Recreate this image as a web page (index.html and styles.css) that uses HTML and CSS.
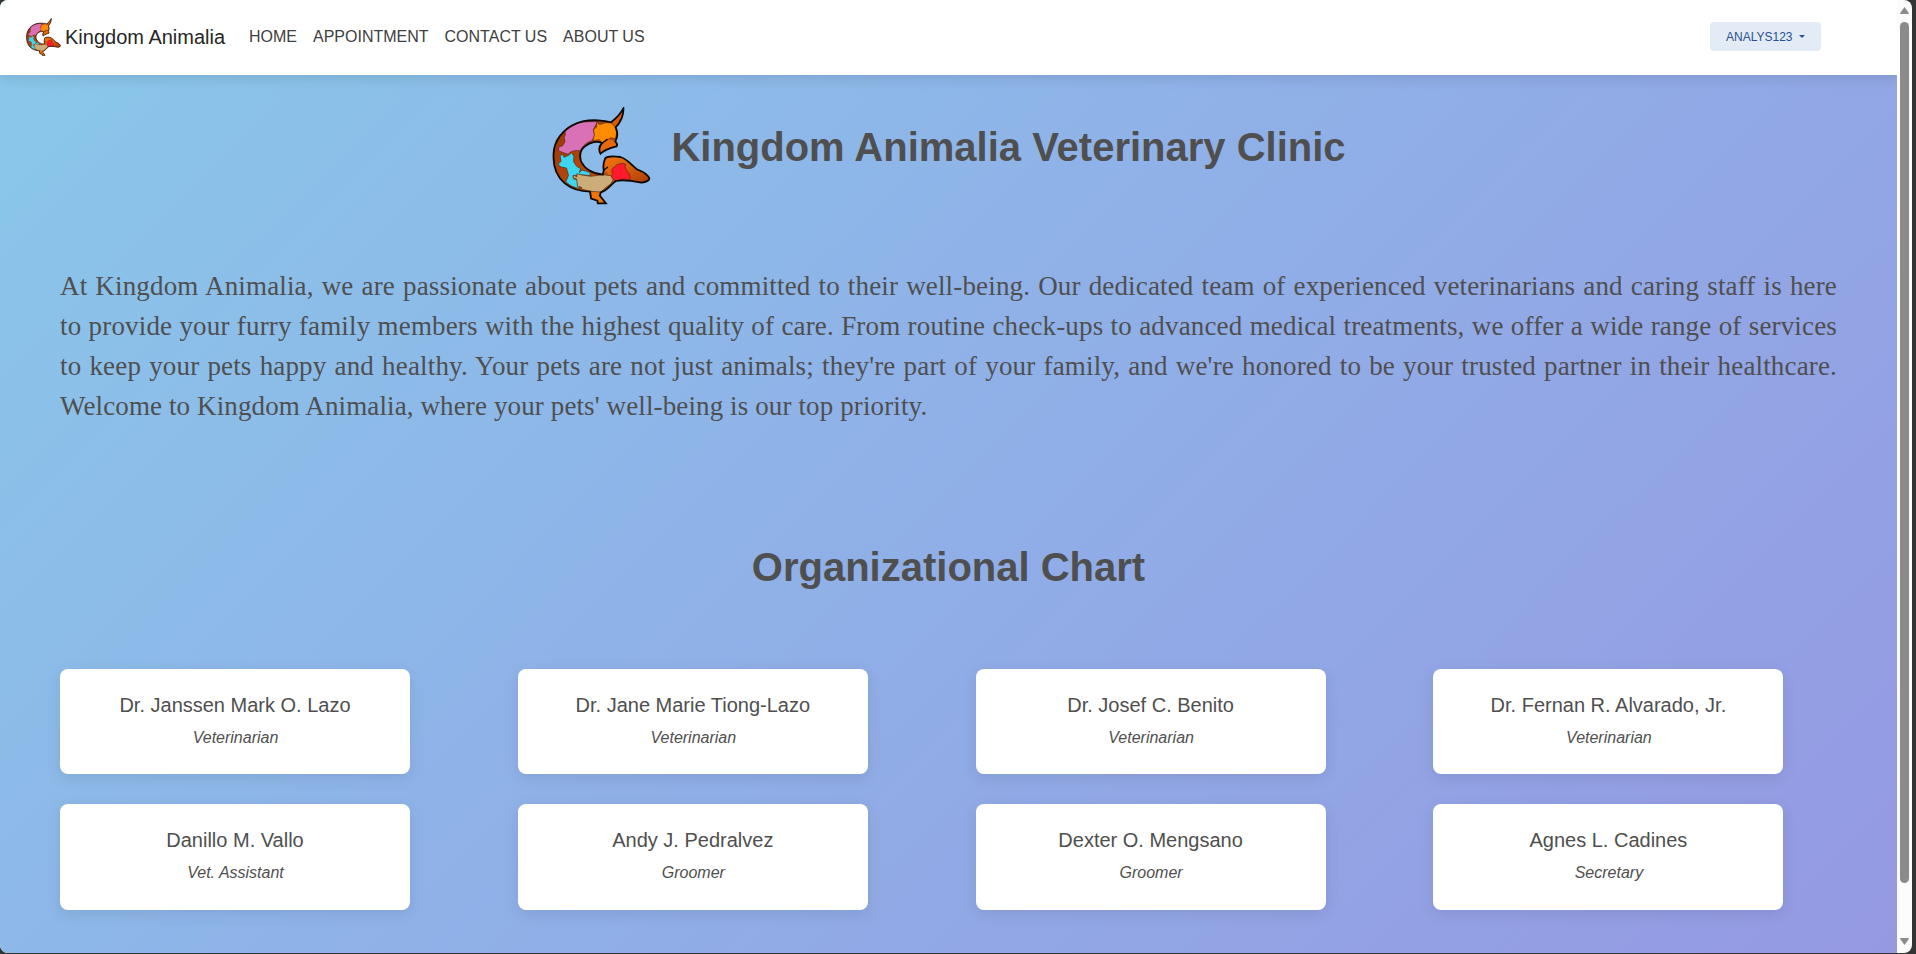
FILE: index.html
```html
<!DOCTYPE html>
<html lang="en">
<head>
<meta charset="utf-8">
<title>Kingdom Animalia</title>
<link rel="stylesheet" href="styles.css">
</head>
<body>
<svg class="defs" width="0" height="0" aria-hidden="true">
  <defs>
    <linearGradient id="fur" x1="0" y1="0" x2="1" y2="1">
      <stop offset="0" stop-color="#8f3208"/><stop offset=".5" stop-color="#b9480c"/><stop offset="1" stop-color="#e0600a"/>
    </linearGradient>
    <linearGradient id="beak" x1="0" y1="0" x2="1" y2="1">
      <stop offset="0" stop-color="#f07810"/><stop offset=".5" stop-color="#d95c0a"/><stop offset="1" stop-color="#a83e08"/>
    </linearGradient>
    <symbol id="logo" viewBox="39 33 294 294" preserveAspectRatio="none">
      <path fill="url(#fur)" d="M251 37C242 55 228 68 214 79C195 73 160 70 130 76C85 88 52 120 45 160C39 205 51 240 77 262C95 277 125 286 152 287L155 308L174 314L175 322H199L181 299L184 289C206 282 215 263 229 255C251 249 280 255 305 260C319 258 330 252 328 247C320 229 303 226 290 219C270 203 262 188 242 183C223 180 202 181 197 187C192 199 190 212 193 222L190 236C161 234 135 219 125 195C120 178 124 161 137 151C153 137 174 135 188 141C178 151 178 163 183 173C196 160 217 155 231 151C234 145 231 140 227 137C234 124 235 109 228 94C242 79 252 60 251 37Z"/>
      <path fill="#d95a0c" d="M251 37C242 55 228 68 214 79L228 94C242 79 252 60 251 37Z"/>
      <path fill="#e8690a" d="M190 138C178 151 178 163 183 173C196 160 217 155 231 151L227 136L205 129Z"/>
      <path fill="url(#beak)" d="M193 222C190 212 192 199 197 187C202 181 223 180 242 183C262 188 270 203 290 219C303 226 320 229 328 247C330 252 319 258 305 260C280 255 251 249 229 255L212 245L200 224L193 235Z"/>
      <path fill="#f27408" d="M152 287L155 308L174 314L175 322H199L181 299L184 289Z"/>
      <g stroke="#49240e" stroke-width="1.8" stroke-linejoin="round">
        <path fill="#da70b6" d="M77 102C100 80 130 76 174 77L162 101L166 119L158 134C145 137 130 148 124 164C105 163 94 165 87 175L70 169L58 164L60 152L70 150L78 136L75 124L79 116Z"/>
        <path fill="#ff8b00" d="M173 77L180 86L198 80L214 80L228 94L231 112L227 128L213 125L198 136L188 140L179 131L160 134L165 117L162 101L171 94Z"/>
        <path fill="#3fd5ef" d="M70 174L75 184L90 177L97 170L104 180L103 197L112 211L124 218L120 230L128 222L150 229L154 239L122 236L101 239L104 249L115 252L117 273L124 279L98 271L80 258L88 238L82 216L66 213L57 205L66 196L63 180Z"/>
        <path fill="#ccac79" d="M113 233L128 237L155 241L190 236L213 239L223 247L214 263L197 276L184 288L152 286L127 279L126 273L115 272L112 249L101 245L105 238L113 243Z"/>
        <path fill="#ff192d" d="M218 218L227 211L231 206L247 202L257 204L256 213L261 224L269 234L272 251L247 249L230 255L217 247L216 238L221 232L216 229Z"/>
      </g>
      <path fill="none" stroke="#0c0806" stroke-width="5.4" stroke-linejoin="miter" d="M251 37C242 55 228 68 214 79C195 73 160 70 130 76C85 88 52 120 45 160C39 205 51 240 77 262C95 277 125 286 152 287L155 308L174 314L175 322H199L181 299L184 289C206 282 215 263 229 255C251 249 280 255 305 260C319 258 330 252 328 247C320 229 303 226 290 219C270 203 262 188 242 183C223 180 202 181 197 187C192 199 190 212 193 222L190 236C161 234 135 219 125 195C120 178 124 161 137 151C153 137 174 135 188 141C178 151 178 163 183 173C196 160 217 155 231 151C234 145 231 140 227 137C234 124 235 109 228 94C242 79 252 60 251 37Z"/>
      <path fill="none" stroke="#0c0806" stroke-width="4" d="M193 222L205 213M188 141L204 129"/>
    </symbol>
  </defs>
</svg>
<div class="window">
  <div class="page">
    <nav class="navbar">
      <a class="brand"><svg class="brand-logo"><use href="#logo"/></svg><span class="brand-name">Kingdom Animalia</span></a>
      <div class="links"><a>HOME</a><a>APPOINTMENT</a><a>CONTACT US</a><a>ABOUT US</a></div>
      <button class="user">ANALYS123<span class="caret"></span></button>
    </nav>
    <main>
      <header class="hero">
        <svg class="hero-logo"><use href="#logo"/></svg>
        <h1>Kingdom Animalia Veterinary Clinic</h1>
      </header>
      <p class="about">
        <span>At Kingdom Animalia, we are passionate about pets and committed to their well-being. Our dedicated team of experienced veterinarians and caring staff is here</span>
        <span>to provide your furry family members with the highest quality of care. From routine check-ups to advanced medical treatments, we offer a wide range of services</span>
        <span>to keep your pets happy and healthy. Your pets are not just animals; they're part of your family, and we're honored to be your trusted partner in their healthcare.</span>
        <span class="last">Welcome to Kingdom Animalia, where your pets' well-being is our top priority.</span>
      </p>
      <h2>Organizational Chart</h2>
      <section class="chart">
        <div class="card"><h5>Dr. Janssen Mark O. Lazo</h5><em>Veterinarian</em></div>
        <div class="card"><h5>Dr. Jane Marie Tiong-Lazo</h5><em>Veterinarian</em></div>
        <div class="card"><h5>Dr. Josef C. Benito</h5><em>Veterinarian</em></div>
        <div class="card"><h5>Dr. Fernan R. Alvarado, Jr.</h5><em>Veterinarian</em></div>
        <div class="card"><h5>Danillo M. Vallo</h5><em>Vet. Assistant</em></div>
        <div class="card"><h5>Andy J. Pedralvez</h5><em>Groomer</em></div>
        <div class="card"><h5>Dexter O. Mengsano</h5><em>Groomer</em></div>
        <div class="card"><h5>Agnes L. Cadines</h5><em>Secretary</em></div>
      </section>
    </main>
  </div>
  <div class="scrollbar">
    <svg width="9" height="7"><path fill="#8b8b8b" d="M4.5 0L9 6.2Q9 7 8 7H1Q0 7 0 6.2Z"/></svg>
    <div class="thumb"></div>
    <svg width="9" height="7"><path fill="#8b8b8b" d="M4.5 7L9 .8Q9 0 8 0H1Q0 0 0 .8Z"/></svg>
  </div>
</div>
</body>
</html>
```
FILE: styles.css
```css
* { box-sizing: border-box; }
html, body { margin: 0; height: 100%; overflow: hidden; }
body { background: #343434; font-family: "Liberation Sans", Arial, sans-serif; font-size: 16px; color: #4f4f4f; }
.defs { position: absolute; }
.window { display: flex; width: 1912px; height: 953px; border-radius: 8px; overflow: hidden; background: #fcfcfc; }
.page { width: 1897px; height: 953px; overflow: hidden; background: linear-gradient(135deg, #89c8ea 0%, #8fb2e8 45%, #9599e2 100%); }
.navbar { display: flex; align-items: center; height: 75px; padding: 0 76px 2px 26px; background: #fff; box-shadow: 0 4px 12px rgba(0,0,0,.1); }
.brand { display: flex; align-items: center; color: #262626; font-size: 20px; }
.brand-logo { width: 35px; height: 38px; margin: 1px 4px 0 0; }
.brand-name { width: 159px; padding-top: 2px; white-space: nowrap; }
.links { display: flex; gap: 16px; margin-left: 25px; color: #404040; white-space: nowrap; }
.user { display: flex; align-items: center; width: 111px; height: 29px; margin-left: auto; padding: 0 16px; border: 0; border-radius: 4px; background: #e3ebf7; color: #285192; font: 12px "Liberation Sans", Arial, sans-serif; }
.caret { margin-left: 6px; border: 3.5px solid transparent; border-top-color: #285192; border-bottom: 0; }
main { padding: 32px 60px 0; }
.hero { display: flex; justify-content: center; height: 100px; padding-left: 1px; }
.hero-logo { width: 99px; height: 98px; margin-right: 20px; }
h1, h2 { margin: 0; font-size: 40px; line-height: 48px; font-weight: 700; text-align: center; white-space: nowrap; }
h1 { margin-top: 16px; }
.about { margin: 59px 0 0; font: 27px/40px "Liberation Serif", serif; letter-spacing: .16px; }
.about span { display: block; white-space: nowrap; text-align: justify; text-align-last: justify; }
.about .last { width: 867px; letter-spacing: .12px; }
h2 { margin-top: 117px; }
.chart { display: grid; grid-template-columns: repeat(4, 350px); grid-template-rows: 105px 106px; gap: 30px 107.8px; margin-top: 78px; }
.card { padding: 24px 20px; border-radius: 8px; background: #fff; text-align: center; box-shadow: 0 4px 16px rgba(0,0,0,.09); }
.card h5 { margin: 0 0 9px; font-size: 20px; line-height: 24px; font-weight: 400; white-space: nowrap; }
.card em { display: block; line-height: 24px; padding-left: 1px; }
.scrollbar { display: flex; flex-direction: column; align-items: center; width: 15px; padding: 7px 0 8px; }
.thumb { width: 9px; height: 861px; margin: 8px 0 auto; border-radius: 4.5px; background: #8b8b8b; }
```
